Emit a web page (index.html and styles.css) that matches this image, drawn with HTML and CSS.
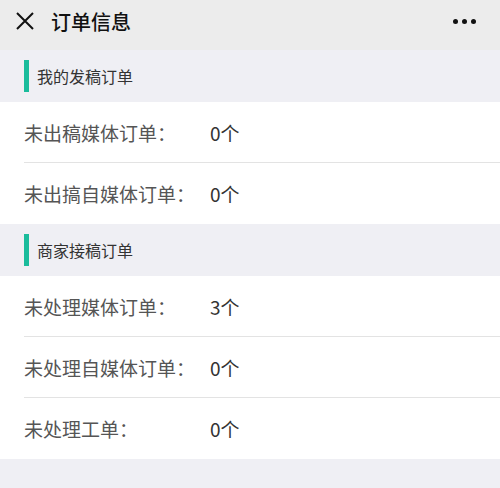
FILE: index.html
```html
<!DOCTYPE html>
<html>
<head>
    <meta charset="UTF-8">
    <meta name="viewport" content="width=device-width, initial-scale=1.0">
    <link rel="stylesheet" href="styles.css">
</head>
<body>
    <!-- 顶部导航 -->
    <div class="topbar">
        <svg class="close" width="20" height="20" viewBox="0 0 20 20">
            <path d="M2 2 L18 18 M18 2 L2 18" stroke="#111" stroke-width="2" fill="none"/>
        </svg>
        <div class="title">订单信息</div>
        <div class="more"><span></span><span></span><span></span></div>
    </div>

    <!-- 我的发稿订单 -->
    <div class="section-title"><i class="bar"></i>我的发稿订单</div>
    <div class="list">
        <div class="item">
            <div class="label">未出稿媒体订单：</div>
            <div class="value">0个</div>
        </div>
        <div class="item">
            <div class="label">未出搞自媒体订单：</div>
            <div class="value">0个</div>
        </div>
    </div>

    <!-- 商家接稿订单 -->
    <div class="section-title"><i class="bar"></i>商家接稿订单</div>
    <div class="list">
        <div class="item">
            <div class="label">未处理媒体订单：</div>
            <div class="value">3个</div>
        </div>
        <div class="item">
            <div class="label">未处理自媒体订单：</div>
            <div class="value">0个</div>
        </div>
        <div class="item">
            <div class="label">未处理工单：</div>
            <div class="value">0个</div>
        </div>
    </div>
</body>
</html>
```

FILE: styles.css
```css
body {
    margin: 0;
    font-family: "Noto Sans CJK SC", "Noto Sans", sans-serif;
    background-color: #efeff4;
    height: 488px;
    overflow: hidden;
}
.topbar {
    height: 50px;
    background: #ececec;
    display: flex;
    align-items: center;
    padding: 0 0 8px 15px;
    box-sizing: border-box;
}
.close {
    display: block;
}
.title {
    margin-left: 16px;
    font-size: 20px;
    font-weight: 500;
    color: #111;
    flex: 1;
}
.more {
    display: flex;
    gap: 4px;
    margin-right: 24px;
}
.more span {
    width: 5px;
    height: 5px;
    border-radius: 50%;
    background: #111;
}
.section-title {
    height: 52px;
    display: flex;
    align-items: center;
    padding-left: 24px;
    font-size: 16px;
    color: #333;
}
.section-title .bar {
    width: 5px;
    height: 32px;
    background: #1abc9c;
    margin-right: 8px;
}
.list {
    background: #fff;
    padding-left: 24px;
}
.item {
    height: 61px;
    display: flex;
    align-items: center;
    border-bottom: 1px solid #e3e3e3;
    box-sizing: border-box;
    font-size: 19px;
}
.item:last-child {
    border-bottom: none;
}
.label {
    width: 186px;
    color: #555;
}
.value {
    color: #333;
}
```
